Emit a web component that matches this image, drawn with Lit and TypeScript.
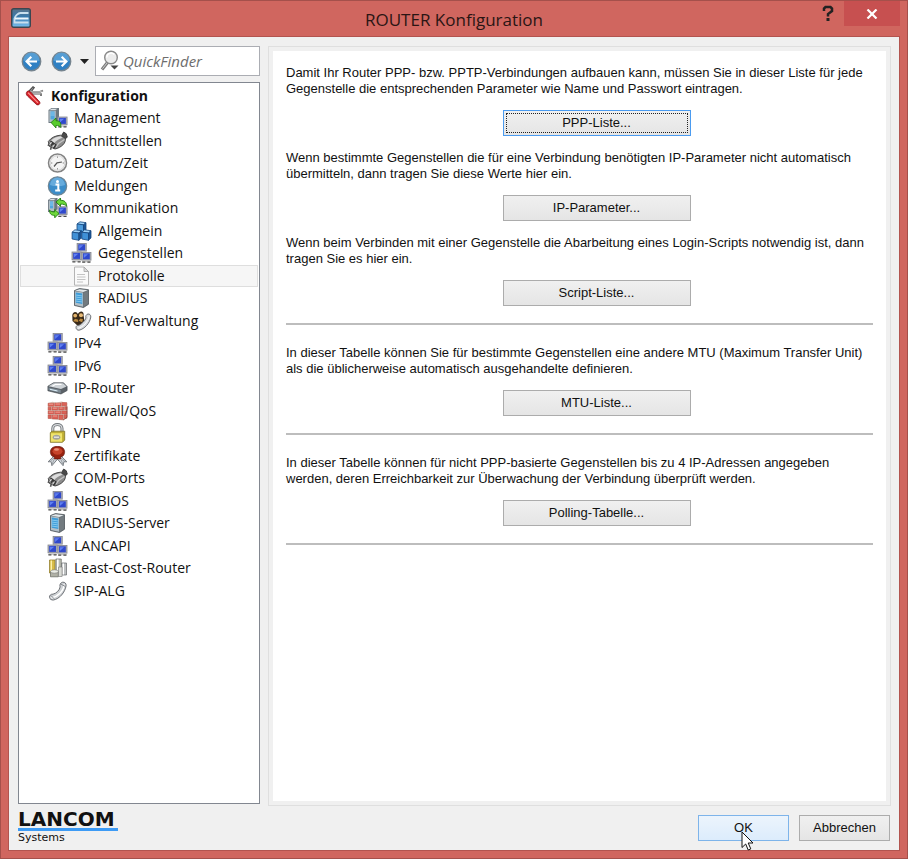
import { LitElement, html, svg, css, nothing } from "lit";
import { customElement, state } from "lit/decorators.js";

type Node = { label: string; icon: string; level: number };

const NODES: Node[] = [
  { label: "Konfiguration", icon: "knife", level: 1 },
  { label: "Management", icon: "management", level: 2 },
  { label: "Schnittstellen", icon: "plug", level: 2 },
  { label: "Datum/Zeit", icon: "clock", level: 2 },
  { label: "Meldungen", icon: "info", level: 2 },
  { label: "Kommunikation", icon: "comm", level: 2 },
  { label: "Allgemein", icon: "cubes", level: 3 },
  { label: "Gegenstellen", icon: "net", level: 3 },
  { label: "Protokolle", icon: "page", level: 3 },
  { label: "RADIUS", icon: "server", level: 3 },
  { label: "Ruf-Verwaltung", icon: "calls", level: 3 },
  { label: "IPv4", icon: "net", level: 2 },
  { label: "IPv6", icon: "net", level: 2 },
  { label: "IP-Router", icon: "router", level: 2 },
  { label: "Firewall/QoS", icon: "wall", level: 2 },
  { label: "VPN", icon: "lock", level: 2 },
  { label: "Zertifikate", icon: "seal", level: 2 },
  { label: "COM-Ports", icon: "plug", level: 2 },
  { label: "NetBIOS", icon: "net", level: 2 },
  { label: "RADIUS-Server", icon: "server", level: 2 },
  { label: "LANCAPI", icon: "net", level: 2 },
  { label: "Least-Cost-Router", icon: "coins", level: 2 },
  { label: "SIP-ALG", icon: "phone", level: 2 },
];

const pc = (x: number, y: number) => svg`
  <rect x=${x} y=${y} width="10" height="8.6" fill="#85878f"/>
  <rect x=${x + 0.8} y=${y + 0.7} width="8.4" height="7.2" fill="#a9acb8"/>
  <rect x=${x + 1.6} y=${y + 1.3} width="6.8" height="6" fill="#2f48cc"/>
  <path d="M${x + 2.4} ${y + 6} V${y + 2.2} H${x + 6.6}Z" fill="#5f80f2"/>
  <path d="M${x + 1} ${y + 8.6}h8l.6 1.6h-9z" fill="#c2c2c2"/>
  <path d="M${x + 0.8} ${y + 10.2}h3M${x + 6} ${y + 10.2}h3" stroke="#4a4a4a" stroke-width="1.2"/>`;

const tower = (x: number, y: number, w: number, h: number) => svg`
  <path d="M${x} ${y + 2}l3-2h${w - 3}v${h - 3}l-3 3h${3 - w}z" fill="#6d7880"/>
  <path d="M${x + 0.8} ${y + 2}l2.6-1.3h${w - 5}l-2 1.3z" fill="#dfe4e8"/>
  <rect x=${x + 0.8} y=${y + 2.6} width=${w - 4} height=${h - 3.6} fill="#b3bec6"/>
  <rect x=${x + 2} y=${y + 3.4} width=${w - 6.4} height=${h - 7} fill="#4fa6dd"/>
  <path d="M${x + 2} ${y + 5}h${w - 6.4}M${x + 2} ${y + 7}h${w - 6.4}" stroke="#a8d8f5" stroke-width=".7"/>`;

const ICONS: Record<string, unknown> = {
  knife: svg`
    <path d="M3 5.500L7.500 .8l1.300.9L5.500 6" fill="#aaa" stroke="#4e4e4e" stroke-width="1.100"/>
    <path d="M3.500 5.800h11l3-1.300M6 8h9.500v2" fill="none" stroke="#666" stroke-width="1.700"/>
    <path d="M4.500 5.800h10l2.500-1M7 8h8" fill="none" stroke="#dedede" stroke-width=".8"/>
    <path d="M1 6.400c.7-1.700 2.800-1.800 4-.5L14.300 16c.7 1.900-1.100 3.500-3.100 2.700L2 10C.9 9 .5 7.700 1 6.400z" fill="#d41f28" stroke="#8b1216" stroke-width=".8"/>
    <path d="M2.600 6.700l9.900 10.200" stroke="#ff8f8a" stroke-width="1.300"/>`,
  management: svg`
    ${tower(1, 0, 10.5, 15)}${pc(10, 8.6)}
    <path d="M3.500 14.500l5-4.500v2.700c3 0 4.800 1.200 4.800 3.500v3.300c-1.200-1.600-2.500-2-4.800-2V20z" fill="#58cb2d" stroke="#1e7a10" stroke-width=".8"/>`,
  plug: svg`
    <path d="M14 4.500l2.200-3.500 2.600 1.800 1 3.200-2.500 2.500" fill="#4a4a4a" stroke="#2b2b2b" stroke-width=".8"/>
    <path d="M.8 10.500C3.500 6.600 8 4.600 13 4.200l4.800 3.200c1 4.500-4 9.300-10.300 10.600L2 15.500z" fill="#8d8d8d" stroke="#3c3c3c" stroke-width=".9"/>
    <path d="M3.500 9.500C6 6.800 9.500 5.600 13 5.300l2 1.500C11.500 8 8.500 9.800 6.500 12.300z" fill="#dcdcdc"/>
    <path d="M8.500 16l2.500-3.500 6-4" stroke="#c4c4c4" stroke-width="1.300" fill="none"/>
    <path d="M3 10l2.600 2-2 2.800M6 12.500l2.300 1.500-2.300 3.500" fill="none" stroke="#383838" stroke-width="1.500"/>
    <path d="M1.500 12.500l-.8 2.500M4 15.500l-1 3.200" stroke="#555" stroke-width="1.500"/>
    <path d="M4 11.200l-2 2.500M7 13.500l-1.800 2.800" stroke="#eee" stroke-width=".9"/>`,
  clock: svg`
    <circle cx="10" cy="10" r="9" fill="#f4f4f4" stroke="#828282" stroke-width="1.500"/>
    <circle cx="10" cy="10" r="7.300" fill="none" stroke="#cfcfcf" stroke-width=".9"/>
    <path d="M10 3.500v1.300M10 15.200v1.300M3.500 10h1.300M15.200 10h1.300" stroke="#888"/>
    <path d="M14.500 9L9.500 9.800 6.500 13.500" fill="none" stroke="#555" stroke-width="1.200"/>`,
  info: svg`
    <circle cx="10" cy="10" r="9.200" fill="#3c8dc9" stroke="#6e8594" stroke-width="1.200"/>
    <path d="M2.500 9a7.500 7.500 0 0 1 15 0c-4 1.600-11 1.600-15 0z" fill="#78b8e4" opacity=".7"/>
    <circle cx="10" cy="5.500" r="1.500" fill="#fff"/>
    <path d="M8 8.500h2.800v6M7.700 14.500h5" fill="none" stroke="#fff" stroke-width="2"/>`,
  comm: svg`
    ${tower(0.5, 0, 9.5, 14)}${pc(10, 8.3)}
    <path d="M8.500 4l4.500-4v2.300c4 0 6 1.800 6.200 6-1.500-1.700-3.200-2.200-6.200-2.200v2.300z" fill="#6bd83a" stroke="#1e7a10" stroke-width=".9"/>
    <path d="M11.500 15.500l-4.300 4.300v-2.400c-3.500 0-5.200-1.600-5.200-5.400 1.300 1.500 2.700 1.900 5.200 1.900v-2.500z" fill="#6fd83c" stroke="#1e7a10" stroke-width=".9"/>`,
  cubes: svg`
    <g stroke="#16467d" stroke-width=".8" stroke-linejoin="round">
    <path d="M5.500 3l3-2.200 6 .9-2.500 2.100z" fill="#9fd2f8"/><path d="M5.500 3l6.500.8v7.500l-6.500-1z" fill="#4b9bdd"/><path d="M12 3.800l2.500-2.100v7.500L12 11.300z" fill="#1a5598"/>
    <path d="M.6 11.200l2.800-2.400 6.400.9-2.400 2.300z" fill="#9fd2f8"/><path d="M.6 11.200l6.800.8v7.300L.6 18z" fill="#3f90d6"/><path d="M7.400 12l2.400-2.300v7.200l-2.400 2.400z" fill="#1a5598"/>
    <path d="M10.300 11.200l2.700-2.400 6.500.9-2.500 2.300z" fill="#9fd2f8"/><path d="M10.300 11.200l6.700.8v7.300L10.300 18z" fill="#3f90d6"/><path d="M17 12l2.500-2.300v7.200L17 19.300z" fill="#1a5598"/>
    </g>`,
  net: svg`${pc(5.2, 0)}${pc(0.1, 8.6)}${pc(9.9, 9)}`,
  page: svg`
    <path d="M3 1h9.500L17 5.500V19.200H3z" fill="#fafafa" stroke="#b4b4b4"/>
    <path d="M12.500 1v4.500H17z" fill="#ddd" stroke="#a5a5a5" stroke-width=".8"/>
    <path d="M5.500 8.500h8M5.500 11h8.500M5.500 13.500h8.500M5.500 16h6" stroke="#bdbdbd" stroke-width=".9"/>`,
  server: svg`
    <path d="M3 2.500L8 .5l9 1.200v14.600l-5 3.200-9-2z" fill="#6c757b" stroke="#40484d" stroke-width=".7"/>
    <path d="M3.500 2.800L8 1.200l8.200 1-4.500 1.700z" fill="#e3e7e9"/>
    <path d="M3.500 3.300l8 1.100v14.300l-8-1.800z" fill="#b4c0c8"/>
    <path d="M4.200 4.600l6.600 1v10.500l-6.600-1.400z" fill="#3f9cd8"/>
    <path d="M4.200 7l6.600 1M4.200 9l6.600 1M4.200 11l6.600 1M4.200 13l6.600 1" stroke="#a5dcf9" stroke-width=".7"/>
    <path d="M12.300 5v13.400l4-2.700V3.200z" fill="#737b80"/>`,
  calls: svg`
    <path d="M.8 4.500c0-4 4.500-4.800 5.600-1.400C8-.8 13-.2 12 4.300L13 10 7 15.500 1 10z" fill="#392a19"/>
    <circle cx="3.700" cy="4.600" r="1.900" fill="#e3b36b"/><circle cx="9.500" cy="4.300" r="2" fill="#e8bb77"/>
    <path d="M1.500 10.300l2-2.600 2.800.8.500 2.500zM7 9.800l2-2.200 2.500.6-.8 3z" fill="#b9883f"/>
    <path d="M4.500 16.800c-.2-1.800 1.300-2.900 3-2.500 3-1.500 6-4.500 7-7.300-.8-1.800.3-3.700 2-4 1.700-.2 3 1.200 2.800 3C18.500 12 13 18 7.600 19.200c-1.700.2-2.900-.9-3.100-2.400z" fill="#d9dcdf" stroke="#64686c" stroke-width=".9"/>
    <path d="M6.500 17.300c5-1.300 10-6.300 11.200-12" fill="none" stroke="#fff"/>`,
  router: svg`
    <path d="M.4 8.200L6 4.800h10l3.600 3.800v4L13.500 16 .4 12.800z" fill="#5b6268" stroke="#3b4247" stroke-width=".6"/>
    <path d="M1 8.300L6.200 5.200h9.500l3.300 3.300-5.500 2.600z" fill="#cfd4d8"/>
    <path d="M5 8.200l3-1.900h6" fill="none" stroke="#fff" stroke-width="1.200"/>
    <path d="M1 9.400l12.200 2.700v2.800L1 12z" fill="#7e8c96"/>
    <path d="M2.500 11.300l7.500 1.700" stroke="#dff1fb" stroke-width="1"/>`,
  wall: svg`
    <path d="M.3 2L5 .8l4 .8 5-1 5.700 1.300v15l-4 2.600L.3 17.800z" fill="#d9c0b6"/>
    <g fill="#dc6257" stroke="#b04a40" stroke-width=".4">
    <path d="M.7 2.300h5.600v2.900H.7zM7.300 2h6.200v3H7.300zM14.300 1.500h5v3.200h-5zM.7 6.200h2.800v2.900H.7zM4.500 6.200h5.700v2.900H4.500zM11.200 6h5v3h-5zM17.200 5.700h2.100v3h-2.100zM.7 10.100h5.500V13H.7zM7.200 10.100h6v2.900h-6zM14.200 9.900h5.100v3h-5.100zM.7 14h3.100v3.400H.7zM4.800 14h5.600v3.900H4.800zM11.400 14h4v4.500h-4zM16.400 13.700h2.900v3.600h-2.900z"/></g>
    <path d="M1.500 3.200h4M8 3h4.500M5.300 7.200h4M1.500 11.100h4M8 11.100h4.500M12 7h3M5.500 15h4" stroke="#f3a095" stroke-width=".9"/>
    <path d="M15.500 19l4-2.600v-11" fill="none" stroke="#8f3a32" stroke-width=".8"/>`,
  lock: svg`
    <path d="M5.300 9.500V5.500c0-5.300 9.200-5.300 9.200 0v4" fill="none" stroke="#6f7478" stroke-width="3"/>
    <path d="M5.300 9.500V5.500c0-5.300 9.200-5.300 9.200 0v4" fill="none" stroke="#d9dcdf" stroke-width="1.200"/>
    <path d="M2.800 9.700l1.600-1.500H17.200v8.800l-2.200 2.300H2.800z" fill="#bfae34" stroke="#7e7426" stroke-width=".8"/>
    <path d="M3.400 10.200h11.200v8.500H3.400z" fill="#f0e46a"/>
    <ellipse cx="9" cy="14.200" rx="3.800" ry="2.500" fill="#a3a39a"/><path d="M6.500 14.200h5" stroke="#eee" stroke-width="1.200"/>`,
  seal: svg`
    <path d="M6.500 10L.6 15.800l3-.1.800 4 5.600-6.500zM13.500 10l5.900 5.800-3-.1-.8 4-5.600-6.500z" fill="#d0d5da" stroke="#70767c" stroke-width=".9"/>
    <path d="M6.500 13.500l-1.700 4.500M13.500 13.500l1.700 4.500M3 15l3.500-3M17 15l-3.500-3" stroke="#8f959b" stroke-width=".8"/>
    <path d="M4.500 2C7.500-.4 12.500-.4 15.500 2c2.400 2.500 2 6.300-.3 8.300l-2 .4v2.200H6.800v-2.200l-2-.4C2.500 8.300 2.100 4.500 4.500 2z" fill="#96210f" stroke="#5a130a" stroke-width=".6"/>
    <ellipse cx="10" cy="5.200" rx="5" ry="3.500" fill="#c7432a"/><ellipse cx="9" cy="3.500" rx="2.500" ry="1.200" fill="#e98f76"/>`,
  coins: svg`
    <path d="M2 2h5.500v13H2z" fill="#d8bd48" stroke="#8a7421" stroke-width=".7"/><path d="M3.800 2.500v12" stroke="#fff3b0" stroke-width="1.300"/>
    <path d="M8.300 1h5.500v14H8.300z" fill="#b9bcb2" stroke="#6c6f66" stroke-width=".7"/><path d="M10.300 1.500v12" stroke="#fff" stroke-width="1.600"/>
    <path d="M14 5h5v12h-5z" fill="#bcbfc0" stroke="#65696a" stroke-width=".7"/><path d="M15.800 5.500v11" stroke="#fff" stroke-width="1.400"/>
    <path d="M3 13.500h7.800v5.300H3z" fill="#b0b1a6" stroke="#63655b" stroke-width=".7"/><ellipse cx="6.900" cy="13.500" rx="3.900" ry="1.700" fill="#eceee6" stroke="#777" stroke-width=".6"/>
    <path d="M11 9h3.600v9.500H11z" fill="#d9dbd5" stroke="#777" stroke-width=".6"/>`,
  phone: svg`
    <path d="M2 16.500C1.700 14.500 3.500 12.800 5.500 13.200 9 12.400 12.200 9 12.600 5.900 11.800 4 13 1.500 15.200 1.200c2.200-.2 3.600 1.300 3.400 3.500C17.500 11.500 12 17.800 6 19 4 19.200 2.300 18.200 2 16.500z" fill="#cfd2d5" stroke="#6c7075"/>
    <path d="M4 16.800c5.500-.5 12-6.300 12.800-13.500" fill="none" stroke="#fff" stroke-width="1.400"/>
    <path d="M3.500 14.500l3 3.200M13.500 3.200l4.200 2.200" stroke="#85898e"/>`,
};

type Block = { lines: string; button: string; focus?: boolean; rule?: boolean };

const BLOCKS: Block[] = [
  {
    lines: "Damit Ihr Router PPP- bzw. PPTP-Verbindungen aufbauen kann, müssen Sie in dieser Liste für jede Gegenstelle die entsprechenden Parameter wie Name und Passwort eintragen.",
    button: "PPP-Liste...",
    focus: true,
  },
  {
    lines: "Wenn bestimmte Gegenstellen die für eine Verbindung benötigten IP-Parameter nicht automatisch übermitteln, dann tragen Sie diese Werte hier ein.",
    button: "IP-Parameter...",
  },
  {
    lines: "Wenn beim Verbinden mit einer Gegenstelle die Abarbeitung eines Login-Scripts notwendig ist, dann tragen Sie es hier ein.",
    button: "Script-Liste...",
    rule: true,
  },
  {
    lines: "In dieser Tabelle können Sie für bestimmte Gegenstellen eine andere MTU (Maximum Transfer Unit) als die üblicherweise automatisch ausgehandelte definieren.",
    button: "MTU-Liste...",
    rule: true,
  },
  {
    lines: "In dieser Tabelle können für nicht PPP-basierte Gegenstellen bis zu 4 IP-Adressen angegeben werden, deren Erreichbarkeit zur Überwachung der Verbindung überprüft werden.",
    button: "Polling-Tabelle...",
    rule: true,
  },
];

@customElement("app-root")
export class AppRoot extends LitElement {
  @state() private selected = "Protokolle";

  static styles = css`
    :host {
      display: block;
      font-family: "Liberation Sans", Arial, sans-serif;
      font-size: 13px;
      line-height: 16px;
      color: #111;
    }
    * { box-sizing: border-box; }
    button, input { font: inherit; color: inherit; margin: 0; }
    svg { display: block; flex: none; }
    .window {
      display: flex;
      flex-direction: column;
      min-height: 100vh;
      padding: 0 7px 7px;
      background: #d0665f;
      border: 1px solid #a5504b;
    }
    .titlebar {
      display: grid;
      grid-template-columns: 1fr auto 1fr;
      height: 35px;
    }
    .appicon { padding: 7px 0 0 3px; }
    .title {
      margin: 0;
      font: 400 17px/38px "Open Sans", "Noto Sans", sans-serif;
      color: #2a1514;
    }
    .controls { display: flex; justify-content: flex-end; align-items: flex-start; }
    .help, .close {
      display: flex;
      align-items: center;
      justify-content: center;
      padding: 0;
      border: 0;
      background: none;
    }
    .help { width: 32px; height: 24px; }
    .close { width: 56px; height: 25px; background: #c75050; }
    .client {
      flex: 1;
      display: grid;
      grid-template-columns: 242px 1fr;
      grid-template-rows: 1fr auto;
      column-gap: 8px;
      padding: 9px 8px 6px 9px;
      background: #f0f0f0;
      border: 1px solid #b2544f;
    }
    .side { display: flex; flex-direction: column; gap: 6px; padding-bottom: 2px; }
    .tools { display: flex; align-items: center; height: 30px; }
    .nav {
      flex: none;
      width: 30px;
      height: 30px;
      padding: 0 0 0 3px;
      border: 0;
      background: none;
    }
    .history {
      flex: none;
      width: 17px;
      height: 30px;
      padding: 0 0 0 2px;
      border: 0;
      background: none;
    }
    .finder {
      flex: 1;
      min-width: 0;
      display: flex;
      align-items: center;
      gap: 3px;
      height: 30px;
      padding-left: 4px;
      background: #fff;
      border: 1px solid #abadb3;
    }
    .finder input {
      flex: 1;
      min-width: 0;
      padding: 0;
      border: 0;
      outline: 0;
      background: none;
      font: italic 400 15px/20px "Open Sans", "Noto Sans", sans-serif;
    }
    .finder input::placeholder { color: #6d6d6d; opacity: 1; }
    .tree {
      flex: 1;
      margin: 0;
      padding: 2px 1px;
      list-style: none;
      background: #fff;
      border: 1px solid #828790;
      font: 400 14px/20px "Open Sans", "Noto Sans", sans-serif;
    }
    .row { height: 22px; border: 1px solid transparent; }
    .row:nth-child(even) { height: 23px; padding-bottom: 1px; }
    .row a {
      display: flex;
      align-items: center;
      gap: 6px;
      height: 100%;
      color: inherit;
      text-decoration: none;
      white-space: nowrap;
    }
    .level1 a { gap: 5px; padding-left: 4px; font-weight: 700; }
    .level2 a { padding-left: 26px; }
    .level3 a { padding-left: 50px; }
    .selected { background: #f6f6f6; border-color: #dedede; }
    .panel {
      padding: 4px;
      background: #f0f0f0;
      border: 1px solid #dfdfdf;
    }
    .sheet {
      height: 100%;
      padding: 14px 13px;
      background: #fff;
    }
    .block { display: flex; flex-direction: column; align-items: center; }
    .text { align-self: stretch; margin: 0 0 13px; }
    .btn {
      padding: 0 4px;
      height: 26px;
      background: linear-gradient(#f0f0f0, #e5e5e5);
      border: 1px solid #acacac;
    }
    .wide { width: 188px; margin: 0 0 14px 34px; }
    .focus {
      border-color: #4a9bf0;
      outline: 1px dotted #222;
      outline-offset: -4px;
    }
    .rule {
      align-self: stretch;
      height: 2px;
      margin: 3px 0 20px;
      border: 0;
      background: #bdbdbd;
    }
    .footer {
      grid-column: 1 / -1;
      display: flex;
      align-items: flex-start;
      justify-content: space-between;
      padding: 5px 1px 0 0;
    }
    .logo { display: flex; flex-direction: column; width: 100px; }
    .brand {
      padding-bottom: 1px;
      font: 700 20px/16px "DejaVu Sans", sans-serif;
      border-bottom: 3px solid #3d9bf5;
    }
    .sub { font: 400 11px/13px "DejaVu Sans", sans-serif; }
    .actions { display: flex; gap: 10px; padding-top: 4px; }
    .action { position: relative; width: 91px; }
    .ok { background: linear-gradient(#ecf4fc, #dcecfc); border-color: #7eb4ea; }
    .cursor { position: absolute; left: 42px; top: 15px; }
  `;

  private tree() {
    return html`<ul class="tree" role="tree" aria-label="Konfiguration">
      ${NODES.map(
        (n) => html`<li
          class="row level${n.level} ${n.label === this.selected ? "selected" : ""}"
          role="treeitem"
          aria-level=${n.level}
          aria-selected=${n.label === this.selected}
        ><a href="#" @click=${(e: Event) => { e.preventDefault(); this.selected = n.label; }}
            ><svg width="21" height="20" viewBox="0 0 20 20" aria-hidden="true">${ICONS[n.icon]}</svg
            ><span>${n.label}</span></a></li>`
      )}
    </ul>`;
  }

  private arrow(label: string, d: string) {
    return html`<button class="nav" aria-label=${label}>
      <svg width="21" height="21" viewBox="0 0 21 21">
        <circle cx="10.500" cy="10.500" r="9.200" fill="#2f80c3" stroke="#75848f" stroke-width="1.400"/>
        <path d="M2.500 9.500a8 8 0 0 1 16 0c-4 2-12 2-16 0z" fill="#6fb1e0" opacity=".6"/>
        <path d=${d} fill="none" stroke="#fff" stroke-width="2.200"/>
      </svg>
    </button>`;
  }

  render() {
    return html`<div class="window">
      <header class="titlebar">
        <div class="appicon">
          <svg width="20" height="20" viewBox="0 0 20 20" aria-hidden="true">
            <defs><linearGradient id="app" x2="0" y2="1"><stop stop-color="#5b7389"/><stop offset=".45" stop-color="#3679ae"/><stop offset="1" stop-color="#7cc2f2"/></linearGradient></defs>
            <rect x=".7" y=".7" width="18.600" height="18.600" rx="2" fill="url(#app)" stroke="#3b4650" stroke-width="1.400"/>
            <path d="M17.500 5H9.500C7 5 4 8 3.500 10.500V14.500h14" fill="none" stroke="#c9dfee" stroke-width="1.800"/>
            <path d="M4 10.500h13.500" stroke="#eef7fd" stroke-width="2"/>
          </svg>
        </div>
        <h1 class="title">ROUTER Konfiguration</h1>
        <div class="controls">
          <button class="help" aria-label="Hilfe">
            <svg width="12" height="16" viewBox="0 0 12 16"><path d="M2 6V3.500L3.500 2H8.500L10 3.500V6L6 9V11.500" fill="none" stroke="#222" stroke-width="2.500"/><rect x="4.500" y="13" width="3" height="3" fill="#222"/></svg>
          </button>
          <button class="close" aria-label="Schließen">
            <svg width="12" height="10" viewBox="0 0 12 10"><path d="M1.500.5l9 9M10.500.5l-9 9" stroke="#fff" stroke-width="2.200"/></svg>
          </button>
        </div>
      </header>
      <main class="client">
        <div class="side">
          <div class="tools">
            ${this.arrow("Zurück", "M16 10.500H6M10.300 5.800L5.600 10.500l4.700 4.700")}
            ${this.arrow("Vor", "M5 10.500h10M10.700 5.800l4.700 4.700-4.700 4.700")}
            <button class="history" aria-label="Verlauf">
              <svg width="9" height="5" viewBox="0 0 9 5"><path d="M0 0h9L4.500 5z" fill="#222"/></svg>
            </button>
            <label class="finder">
              <svg width="20" height="22" viewBox="0 0 20 22" aria-hidden="true">
                <path d="M7.500 12.500L2 19.500" stroke="#7b7b7b" stroke-width="3.200"/>
                <path d="M7 13l-4.500 5.700" stroke="#ccc" stroke-width="1"/>
                <circle cx="11" cy="7.500" r="6.300" fill="#ececec" stroke="#8a8a8a" stroke-width="1.400"/>
                <path d="M6.800 7.500a4.300 4.300 0 0 1 7.500-3" fill="none" stroke="#fff" stroke-width="1.500"/>
                <path d="M10.500 15.500h8l-4 4z" fill="#444"/>
              </svg>
              <input type="text" placeholder="QuickFinder" aria-label="QuickFinder" />
            </label>
          </div>
          ${this.tree()}
        </div>
        <section class="panel">
          <div class="sheet">
            ${BLOCKS.map(
              (b) => html`<div class="block">
                <p class="text">${b.lines}</p>
                <button class="btn wide ${b.focus ? "focus" : ""}">${b.button}</button>
                ${b.rule ? html`<hr class="rule" />` : nothing}
              </div>`
            )}
          </div>
        </section>
        <footer class="footer">
          <div class="logo"><span class="brand">LANCOM</span><span class="sub">Systems</span></div>
          <div class="actions">
            <button class="btn action ok">OK<svg class="cursor" width="13" height="21" viewBox="0 0 13 21" aria-hidden="true"><path d="M1 1v15.500l3.700-3.500 2.500 6 2.600-1.100-2.600-5.900H12z" fill="#fff" stroke="#111"/></svg></button>
            <button class="btn action">Abbrechen</button>
          </div>
        </footer>
      </main>
    </div>`;
  }
}
